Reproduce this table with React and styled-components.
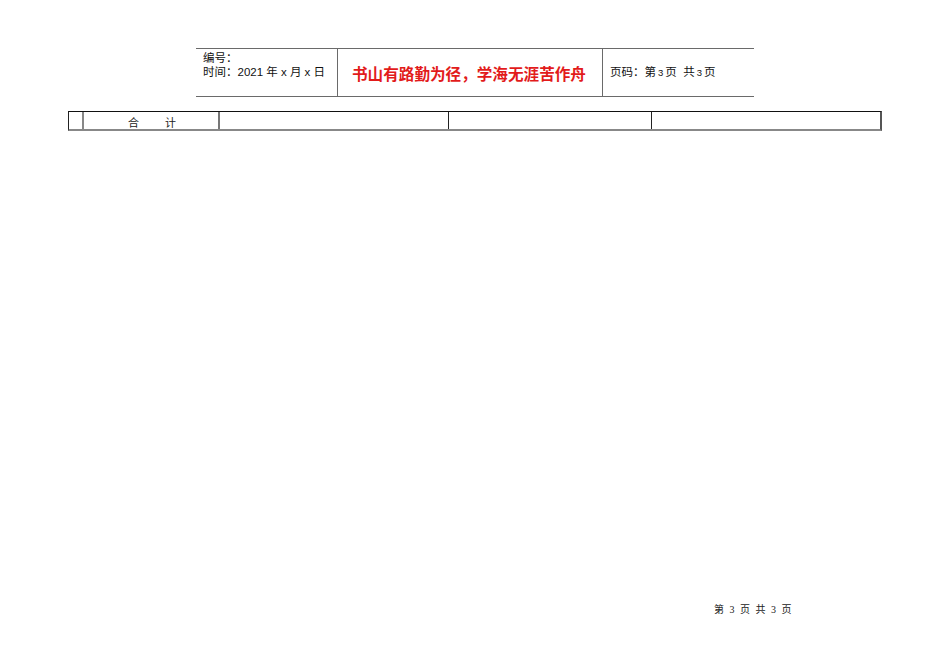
import React from "react";
import styled, { createGlobalStyle } from "styled-components";

const GlobalStyle = createGlobalStyle`
  html, body {
    margin: 0;
    padding: 0;
    background: #fff;
  }
  body {
    font-family: "Liberation Sans", "Noto Sans CJK SC", sans-serif;
    color: #000;
  }
`;

const Page = styled.div`
  width: 950px;
  height: 672px;
  display: flex;
  flex-direction: column;
  box-sizing: border-box;
  padding-top: 48px;
`;

const Header = styled.div`
  display: flex;
  margin-left: 196px;
  width: 558px;
  height: 49px;
  border-top: 1px solid #6a6a6a;
  border-bottom: 1px solid #6a6a6a;
  box-sizing: border-box;
`;

const HeaderCell = styled.div`
  width: ${(p) => p.width}px;
  box-sizing: border-box;
  border-left: ${(p) => (p.divider ? "1px solid #6a6a6a" : "none")};
  display: flex;
  flex-direction: column;
  justify-content: ${(p) => (p.top ? "flex-start" : "center")};
  padding: ${(p) => p.pad};
  font-size: 11.5px;
  line-height: 14px;
  color: #111;
`;

const Motto = styled.div`
  color: #e21b1b;
  font-size: 15.6px;
  font-weight: 600;
  font-family: "Noto Sans CJK SC", sans-serif;
`;

const Small = styled.span`
  font-size: 9.5px;
  margin: 0 2px;
`;

const Table = styled.div`
  display: flex;
  margin-top: 14px;
  margin-left: 68px;
  width: 814px;
  height: 20px;
  box-sizing: border-box;
  border-top: 1px solid #111;
  border-bottom: 2px solid #888;
  border-left: 1px solid #222;
  border-right: 2px solid #555;
`;

const Cell = styled.div`
  width: ${(p) => p.width}px;
  box-sizing: border-box;
  border-left: ${(p) => p.line || "none"};
  font-size: 11px;
  color: #222;
  display: flex;
  align-items: flex-end;
`;

const Total = styled.span`
  display: flex;
  gap: 26px;
  padding-left: 44px;
  line-height: 11px;
`;

const Footer = styled.div`
  margin-top: auto;
  margin-bottom: 56px;
  margin-left: 714px;
  font-family: "Liberation Serif", "Noto Sans CJK SC", serif;
  font-size: 10px;
  color: #222;
  word-spacing: 3px;
`;

export default function App() {
  return (
    <>
      <GlobalStyle />
      <Page>
        <Header>
          <HeaderCell width={141} top pad="2px 0 0 7px">
            <div>编号：</div>
            <div>时间：2021 年 x 月 x 日</div>
          </HeaderCell>
          <HeaderCell width={265} divider pad="0 0 0 14px">
            <Motto>书山有路勤为径，学海无涯苦作舟</Motto>
          </HeaderCell>
          <HeaderCell width={152} divider pad="0 0 0 7px">
            <div>
              页码：第<Small>3</Small>页&nbsp; 共<Small>3</Small>页
            </div>
          </HeaderCell>
        </Header>

        <Table>
          <Cell width={13} />
          <Cell width={136} line="2px solid #888">
            <Total>
              <span>合</span>
              <span>计</span>
            </Total>
          </Cell>
          <Cell width={230} line="2px solid #777" />
          <Cell width={203} line="1px solid #222" />
          <Cell width={229} line="1px solid #222" />
        </Table>

        <Footer>第 3 页 共 3 页</Footer>
      </Page>
    </>
  );
}
